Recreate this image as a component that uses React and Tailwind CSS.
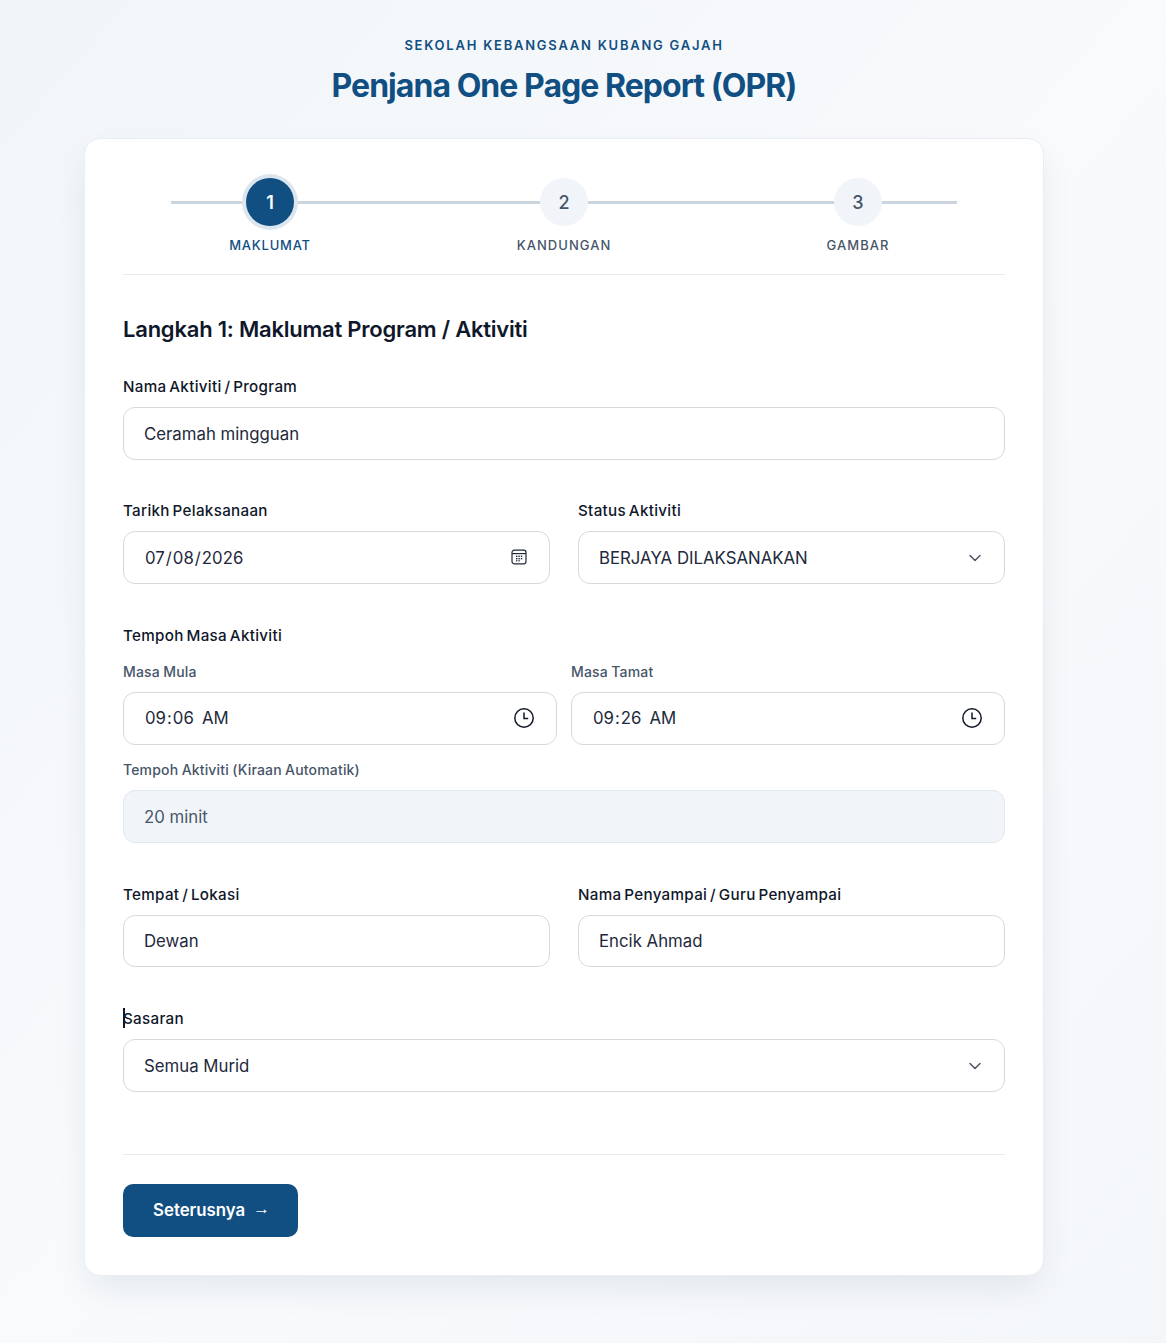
import { ChevronDown } from "lucide-react";

const inputClass =
  "w-full rounded-[12px] border border-[#d5d9de] bg-white px-5 text-[16.8px] text-[#1e293b] outline-none";

const pickerClass =
  "[&::-webkit-calendar-picker-indicator]:opacity-0 [&::-webkit-datetime-edit-ampm-field]:ml-[3px]";

const steps = [
  { number: "1", label: "MAKLUMAT", active: true },
  { number: "2", label: "KANDUNGAN" },
  { number: "3", label: "GAMBAR" },
];

function CalendarIcon() {
  return (
    <svg
      viewBox="0 0 16 16"
      className="pointer-events-none absolute right-[23px] top-[18px] h-4 w-4 text-[#1f2937]"
      fill="none"
      stroke="currentColor"
      strokeWidth="1.2"
    >
      <rect x="1" y="1.2" width="14" height="13.6" rx="2.2" />
      <path d="M1 4.6h14" />
      <g fill="currentColor" stroke="none">
        <rect x="5" y="6.6" width="1.4" height="1.4" />
        <rect x="7.4" y="6.6" width="1.4" height="1.4" />
        <rect x="9.8" y="6.6" width="1.4" height="1.4" />
        <rect x="5" y="9" width="1.4" height="1.4" />
        <rect x="7.4" y="9" width="1.4" height="1.4" />
        <rect x="9.8" y="9" width="1.4" height="1.4" />
        <rect x="5" y="11.2" width="1.4" height="1.2" />
        <rect x="7.4" y="11.2" width="1.4" height="1.2" />
      </g>
    </svg>
  );
}

function ClockIcon() {
  return (
    <svg
      viewBox="0 0 20 20"
      className="pointer-events-none absolute right-[23px] top-[16px] h-5 w-5 text-[#111827]"
      fill="none"
      stroke="currentColor"
      strokeWidth="1.5"
    >
      <circle cx="10" cy="10" r="9.2" />
      <path d="M10 4.4v6.2h4.2" />
    </svg>
  );
}

function Stepper() {
  return (
    <div className="relative grid grid-cols-3 border-b border-[#e7ebef] pb-[20px]">
      <div className="absolute left-[48px] right-[48px] top-[22.5px] h-[3px] bg-[#cad5df]" />
      {steps.map((step) => (
        <div key={step.number} className="relative flex flex-col items-center">
          <div
            className={
              step.active
                ? "flex h-12 w-12 items-center justify-center rounded-full bg-[#114f82] text-[18px] font-semibold text-white ring-4 ring-[#dce6ee]"
                : "flex h-12 w-12 items-center justify-center rounded-full bg-[#f1f5f9] text-[18px] font-medium text-[#475569]"
            }
          >
            {step.number}
          </div>
          <span
            className={
              step.active
                ? "mt-[10px] text-[13px] leading-[18px] font-medium tracking-[0.06em] text-[#114f82]"
                : "mt-[10px] text-[13px] leading-[18px] font-medium tracking-[0.08em] text-[#475569]"
            }
          >
            {step.label}
          </span>
        </div>
      ))}
    </div>
  );
}

function Label({ children }) {
  return (
    <label className="mb-[9px] block text-[15.2px] leading-[23px] font-medium tracking-[0.02em] text-[#0f172a] [word-spacing:-1.5px]">
      {children}
    </label>
  );
}

function SubLabel({ children }) {
  return (
    <label className="mb-[9px] block text-[14px] leading-[22px] font-medium tracking-[0.012em] text-[#475569] [word-spacing:-0.5px]">
      {children}
    </label>
  );
}

function SelectBox({ value, options }) {
  return (
    <div className="relative">
      <select defaultValue={value} className={`${inputClass} h-[53px] appearance-none pt-[2px]`}>
        {options.map((option) => (
          <option key={option}>{option}</option>
        ))}
      </select>
      <ChevronDown
        strokeWidth={1.8}
        className="pointer-events-none absolute right-[20.5px] top-[16.5px] h-5 w-5 text-[#4b5563]"
      />
    </div>
  );
}

export default function App() {
  return (
    <div className="min-h-[1343px] bg-gradient-to-br from-[#f1f5f9] via-[#f8fafc] to-[#f4f7fa] pl-[84px] font-['Inter',sans-serif]">
      <header className="flex w-[960px] flex-col items-center pt-[36px]">
        <p className="text-[13px] leading-[18px] font-semibold tracking-[0.135em] text-[#114f82]">
          SEKOLAH KEBANGSAAN KUBANG GAJAH
        </p>
        <h1 className="mt-[12px] text-[32px] leading-[40px] font-bold tracking-[-0.03em] text-[#114f82]">
          Penjana One Page Report (OPR)
        </h1>
      </header>

      <main className="mt-[32px] w-[960px] rounded-[16px] border border-[#e9edf1] bg-white px-[38px] pt-[39px] pb-[38px] shadow-[0_15px_35px_-5px_rgba(15,40,80,0.09)]">
        <Stepper />

        <h2 className="mt-[38px] text-[22px] leading-[32px] font-semibold tracking-[-0.01em] text-[#0f172a]">
          Langkah 1: Maklumat Program / Aktiviti
        </h2>

        <div className="mt-[30px]">
          <Label>Nama Aktiviti / Program</Label>
          <input className={`${inputClass} h-[53px]`} defaultValue="Ceramah mingguan" />
        </div>

        <div className="mt-[39px] grid grid-cols-2 gap-[28px]">
          <div>
            <Label>Tarikh Pelaksanaan</Label>
            <div className="relative">
              <input type="date" className={`${inputClass} ${pickerClass} h-[53px] pt-[2px]`} defaultValue="2026-07-08" />
              <CalendarIcon />
            </div>
          </div>
          <div>
            <Label>Status Aktiviti</Label>
            <SelectBox value="BERJAYA DILAKSANAKAN" options={["BERJAYA DILAKSANAKAN", "TIDAK BERJAYA"]} />
          </div>
        </div>

        <div className="mt-[40px]">
          <Label>Tempoh Masa Aktiviti</Label>
          <div className="mt-[14px] grid grid-cols-2 gap-[14px]">
            <div>
              <SubLabel>Masa Mula</SubLabel>
              <div className="relative">
                <input type="time" className={`${inputClass} ${pickerClass} h-[53px]`} defaultValue="09:06" />
                <ClockIcon />
              </div>
            </div>
            <div>
              <SubLabel>Masa Tamat</SubLabel>
              <div className="relative">
                <input type="time" className={`${inputClass} ${pickerClass} h-[53px]`} defaultValue="09:26" />
                <ClockIcon />
              </div>
            </div>
          </div>
          <div className="mt-[14px]">
            <SubLabel>Tempoh Aktiviti (Kiraan Automatik)</SubLabel>
            <input
              readOnly
              value="20 minit"
              className="h-[53px] w-full rounded-[12px] border border-[#e2e8f0] bg-[#f1f5f9] px-5 text-[16.8px] text-[#475569] outline-none"
            />
          </div>
        </div>

        <div className="mt-[40px] grid grid-cols-2 gap-[28px]">
          <div>
            <Label>Tempat / Lokasi</Label>
            <input className={`${inputClass} h-[52px]`} defaultValue="Dewan" />
          </div>
          <div>
            <Label>Nama Penyampai / Guru Penyampai</Label>
            <input className={`${inputClass} h-[52px]`} defaultValue="Encik Ahmad" />
          </div>
        </div>

        <div className="relative mt-[40px]">
          {/* text caret sitting on the label */}
          <span className="absolute left-0 top-[1px] h-[20px] w-[1.5px] bg-[#0f172a]" />
          <Label>Sasaran</Label>
          <SelectBox value="Semua Murid" options={["Semua Murid", "Tahap 1", "Tahap 2"]} />
        </div>

        <div className="mt-[62px] border-t border-[#e7ebef] pt-[29px]">
          <button className="flex h-[53px] w-[175px] items-center justify-center gap-[8px] rounded-[10px] bg-[#114f82] pl-[2px] text-[16.8px] font-semibold text-white">
            Seterusnya <span className="-translate-y-[2px] font-['Liberation_Sans',sans-serif] font-normal">→</span>
          </button>
        </div>
      </main>
    </div>
  );
}
